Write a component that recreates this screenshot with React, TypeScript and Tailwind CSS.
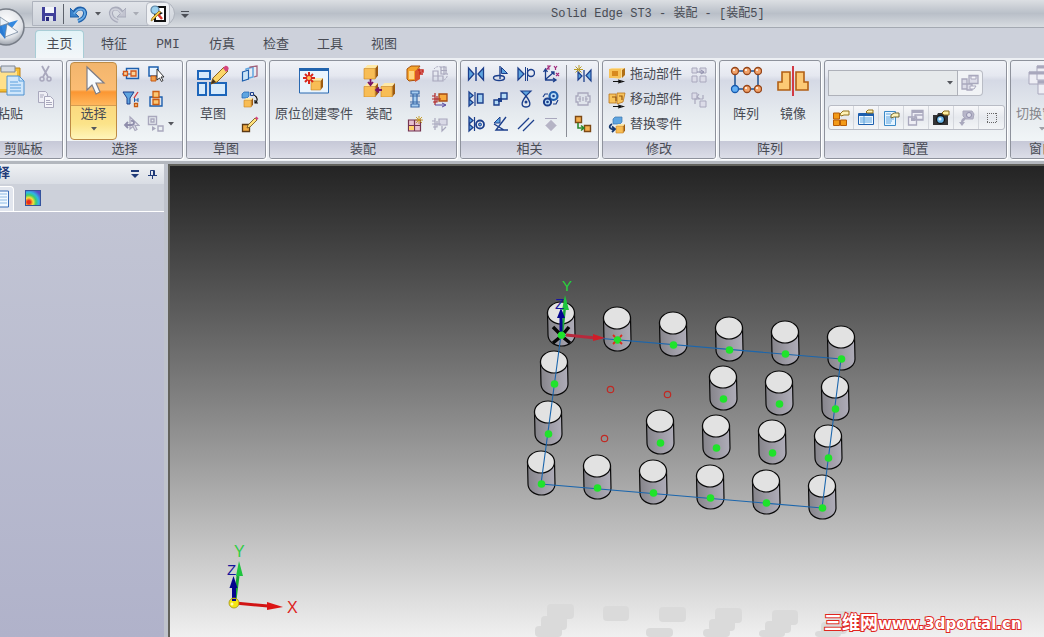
import React from "react";

type IconProps = { children: React.ReactNode; size?: number };

const Icon: React.FC<IconProps> = ({ children, size = 18 }) => (
  <svg
    width={size}
    height={size}
    viewBox={`0 0 ${size} ${size}`}
    fill="none"
    className="shrink-0"
    aria-hidden="true"
  >
    {children}
  </svg>
);

const blue = "#1d5fae";
const navy = "#1c3f8c";
const sky = "#5fa5e0";
const grey = "#a9a8bd";

const Cube: React.FC<{ x: number; y: number; s: number }> = ({ x, y, s }) => (
  <g>
    <path d={`M${x} ${y + s * 0.25}l${s * 0.25} ${-s * 0.25}h${s * 0.75}l${-s * 0.2} ${s * 0.25}z`} fill="#ffe9a6" />
    <path d={`M${x + s * 0.8} ${y + s * 0.25}l${s * 0.2} ${-s * 0.25}v${s * 0.75}l${-s * 0.2} ${s * 0.25}z`} fill="#9c5a10" />
    <path d={`M${x} ${y + s * 0.25}h${s * 0.8}v${s * 0.75}h${-s * 0.8}z`} fill="#f8bd55" stroke="#c98420" strokeWidth="0.6" />
  </g>
);

const icons = {
  cut: (
    <Icon>
      <path d="M5 1l6 11M12 1L6 12" stroke={grey} strokeWidth="1.8" />
      <circle cx="5" cy="14" r="2" stroke={grey} strokeWidth="1.5" />
      <circle cx="12" cy="14" r="2" stroke={grey} strokeWidth="1.5" />
    </Icon>
  ),
  copy: (
    <Icon>
      <path d="M1.5 1.5h7l2 2v9h-9z" fill="#eeeef5" stroke={grey} />
      <path d="M7.5 6.5h6l3 3v8h-9z" fill="#f6f6fa" stroke={grey} />
      <path d="M9 10.500h4M9 12.500h6M9 14.500h6M3 5h4M3 7h3" stroke={grey} />
    </Icon>
  ),
  relate: (
    <Icon>
      <path d="M4.500 3.500h12v10h-12z" stroke={blue} strokeWidth="1.4" />
      <path d="M0 9h9" stroke={blue} />
      <path d="M1.500 6.500h4v4h-4zM9 6h5v5H9z" fill="#fbd39a" stroke="#d4571a" strokeWidth="1.3" />
    </Icon>
  ),
  boxSelect: (
    <Icon>
      <path d="M2 2h9v9H2z" fill="#e9f4ff" stroke={blue} strokeWidth="1.5" />
      <path d="M4 11h5v5H4z" fill="#f2a04a" stroke="#c65b14" />
      <path d="M10 4v11l2.500-2 2 3.500 1.500-1-2-3.500h3z" fill="#fff" stroke="#222" strokeWidth="0.9" />
    </Icon>
  ),
  filter: (
    <Icon>
      <path d="M1 2h11L8 8v6H5V8z" fill={sky} stroke={navy} />
      <path d="M16 2l-4 6" stroke="#d33" strokeWidth="1.3" />
      <path d="M12.500 8v4M16 8v4M12.500 10H16" stroke={blue} />
      <path d="M12.500 13.500h3v3h-3z" fill="#fbd39a" stroke="#c65b14" strokeWidth="1.3" />
    </Icon>
  ),
  partBox: (
    <Icon>
      <path d="M3 7h12v9H3z" stroke={blue} strokeWidth="1.4" />
      <path d="M6 1.500h6v6H6zM6 9.500h6v5H6z" fill="#fbc774" stroke="#cc5c10" strokeWidth="1.3" />
    </Icon>
  ),
  prevSelect: (
    <Icon>
      <path d="M8 2v12l3-2.500 2 4 2-1-2-4h4z" fill="#e2e2ec" stroke={grey} strokeWidth="1.2" />
      <path d="M9 6c4-1 4 4 0 4H3m3-3L3 10l3 3" stroke="#8f8eab" strokeWidth="1.8" />
    </Icon>
  ),
  groupSel: (
    <Icon>
      <path d="M1.500 1.500h8v8h-8zM4 4h3v3H4zM11 11h5v5h-5z" stroke={grey} strokeWidth="1.4" />
      <path d="M5 11l4 2.500L5 16z" fill={grey} />
    </Icon>
  ),
  planes: (
    <Icon>
      <path d="M1.500 7l6-2v9l-6 2z" fill="#cbe4f7" stroke={blue} strokeWidth="1.2" />
      <path d="M5 5V4l7-2v10l-4 1" stroke={sky} strokeWidth="1.5" />
      <path d="M9 3V2l7-1v10l-3 1" stroke="#a3627a" strokeWidth="1.3" />
    </Icon>
  ),
  copySketch: (
    <Icon>
      <path d="M1 4l2-2h5v4L6 8H1z" fill={sky} stroke={blue} strokeWidth="0.7" />
      <path d="M9.500 2.500h3v3h-3z" stroke={navy} />
      <Cube x={3} y={8} s={9} />
      <path d="M13 5c4 2 4 6 1 8m0-3v3h3" stroke="#111" strokeWidth="1.2" />
    </Icon>
  ),
  editSketch: (
    <Icon>
      <path d="M1.500 9.500h7v7h-7z" fill="#f3ad43" stroke="#5b3a16" strokeWidth="1.3" />
      <path d="M7 10l7-7 2 2-7 7-3 1z" fill="#ffe27b" stroke="#6b4c16" strokeWidth="0.8" />
      <path d="M14 3l1.500-1.500 2 2L16 5z" fill="#d6457f" />
    </Icon>
  ),
  panel: (
    <Icon>
      <path d="M1 4l4-3h9l-3 4v10l-8 1-2-2z" fill="#f5a52d" stroke="#a8530b" />
      <path d="M9 6l5-3v11l-5 3z" fill="#d9532c" />
      <path d="M3 6h5v8H3z" fill="#ffd581" />
      <path d="M12 5h5v2h-3v2h3" stroke="#c6271e" strokeWidth="1.5" />
    </Icon>
  ),
  pattern: (
    <Icon>
      <path d="M2 11h5v5H2zM7 11h5v5H7zM2 6h5v5H2z" stroke={grey} strokeWidth="1.2" />
      <path d="M3 4c2-3 6-3 8-1M16 8c1 4-1 6-3 7" stroke={grey} strokeDasharray="2 1" />
      <path d="M10 2h5v7h-5zM10 5.500h6M13 1v9" stroke={grey} strokeWidth="1.2" />
    </Icon>
  ),
  bolt: (
    <Icon>
      <path d="M5 1h8v3H5zM7 4h4v10H7zM5 14h8v3H5z" fill="#a6cdf0" stroke="#3c6ba8" strokeWidth="1.2" />
      <path d="M4 6h10M4 12h10" stroke="#3c6ba8" />
    </Icon>
  ),
  motor: (
    <Icon>
      <path d="M8 4h8v7H8z" fill="#f8a93c" stroke="#a84b11" strokeWidth="1.3" />
      <path d="M4 3v12M1 9h9M1 6h3M6 6v6H2" stroke="#b02424" strokeWidth="1.2" />
      <path d="M4 15h10m-3-2l4 2-4 2" stroke="#53439c" />
    </Icon>
  ),
  fastener: (
    <Icon>
      <path d="M2.500 5h12v11h-12zM2.500 10.500h12M8.500 5v11" fill="#e7c0cf" stroke="#75344f" strokeWidth="1.2" />
      <path d="M3 11h5v4H3z" fill="#ffd36b" />
      <path d="M13 1v8M9 5h8M10 2l6 6M16 2l-6 6" stroke="#c69a19" strokeWidth="0.9" />
    </Icon>
  ),
  motorOff: (
    <Icon>
      <path d="M8 4h8v6H8z" fill="#d9d9e6" stroke={grey} strokeWidth="1.2" />
      <path d="M4 3v12M1 9h9M1 6h3M6 6v6H2M11 11v5l4-4" stroke={grey} strokeWidth="1.2" />
    </Icon>
  ),
  mate: (
    <Icon>
      <path d="M1.500 3L7 9l-5.500 6zM16.500 3L11 9l5.500 6z" fill={sky} stroke={navy} strokeWidth="1.3" />
      <path d="M9 2v14" stroke={navy} strokeWidth="1.5" />
    </Icon>
  ),
  axial: (
    <Icon>
      <path d="M8 1v13" stroke={navy} strokeWidth="1.4" />
      <path d="M9.500 2.500l6 6h-6z" fill={sky} stroke={navy} />
      <ellipse cx="7" cy="13" rx="5.500" ry="2.500" stroke={navy} strokeWidth="1.4" />
    </Icon>
  ),
  insert: (
    <Icon>
      <path d="M1 3l6 6-6 6z" fill={sky} stroke={navy} strokeWidth="1.3" />
      <path d="M8.500 2v14M10.500 3v13" stroke={navy} />
      <circle cx="14" cy="8" r="3.500" stroke={navy} strokeWidth="1.4" />
    </Icon>
  ),
  axes: (
    <Icon>
      <path d="M3.500 15V5m-2 2l2-3 2 3M3 15h10m-2-2l3 2-3 2M4 14l8-7m-3 0h3v3" stroke={navy} strokeWidth="1.3" />
      <path d="M5 1h3L5 4h3M12 1l1.500 2L15 1m-1.500 2v2M14 8l3 3m0-3l-3 3" stroke="#a1297b" strokeWidth="1.2" />
    </Icon>
  ),
  flash: (
    <Icon>
      <path d="M5 0v9M0 4.500h9M1.500 1.500l6 6M7.500 1.500l-6 6" stroke="#b99b26" />
      <path d="M4 7l4 4-4 4zM17 5l-5 5.500 5 5.500z" fill={sky} stroke={navy} strokeWidth="1.2" />
      <path d="M10 5v12" stroke={navy} strokeWidth="1.3" />
    </Icon>
  ),
  align: (
    <Icon>
      <path d="M2 2l4 3.500L2 9zM2 9l4 3.500L2 16z" fill={sky} stroke={navy} strokeWidth="1.3" />
      <path d="M8 2v14" stroke={navy} strokeWidth="1.2" />
      <path d="M10.500 4h5.500v9h-5.500z" fill="#a3d0f2" stroke={navy} strokeWidth="1.4" />
    </Icon>
  ),
  connect: (
    <Icon>
      <path d="M2 10h5v5H2zM9 3h6v6H9z" fill="#b7ddf7" stroke={navy} strokeWidth="1.4" />
      <path d="M6 8h4v4H6z" fill={navy} />
    </Icon>
  ),
  cam: (
    <Icon>
      <path d="M4 1h10L9 6z" fill={sky} stroke={navy} strokeWidth="1.2" />
      <path d="M9 6c-7 9-3 11 0 11s7-2 0-11z" stroke={navy} strokeWidth="1.4" />
      <circle cx="9" cy="12" r="1.500" fill={navy} />
    </Icon>
  ),
  gears: (
    <Icon>
      <circle cx="11.500" cy="6" r="4" fill="#b9dcf7" stroke={blue} strokeWidth="2.200" />
      <circle cx="5.500" cy="12" r="3.600" fill="#b9dcf7" stroke={navy} strokeWidth="2" />
      <circle cx="11.500" cy="6" r="1.300" fill={navy} />
      <circle cx="5.500" cy="12" r="1.300" fill={navy} />
      <path d="M1 7l2-3h3M16 10l-2 4h-3" stroke={navy} strokeWidth="1.2" />
    </Icon>
  ),
  rigid: (
    <Icon>
      <path d="M4 3h10v3h2v6h-2v3H4v-3H2V6h2z" stroke={grey} strokeWidth="1.3" />
      <path d="M6 6v6M9 7v4M12 6v6M4 9h3M11 9h3" stroke={grey} strokeWidth="1.2" />
    </Icon>
  ),
  tangent: (
    <Icon>
      <path d="M2 2l4 3.500L2 9zM2 9l4 3.500L2 16z" fill={sky} stroke={navy} strokeWidth="1.3" />
      <path d="M7.500 2v14" stroke={navy} strokeWidth="1.2" />
      <circle cx="13" cy="9.500" r="4" stroke={navy} strokeWidth="1.8" />
      <circle cx="13" cy="9.500" r="1.500" fill={sky} stroke={navy} />
    </Icon>
  ),
  angle: (
    <Icon>
      <path d="M2 8l6-6v6z" fill={sky} stroke={navy} />
      <path d="M14 2L4 15h12M2 9l10 6" stroke={navy} strokeWidth="1.4" />
    </Icon>
  ),
  parallel: (
    <Icon>
      <path d="M1 14L12 3M6 16L17 5" stroke={navy} strokeWidth="1.3" />
    </Icon>
  ),
  path: (
    <Icon>
      <path d="M3 3.500h12" stroke={grey} />
      <path d="M9 5l5.500 5.500L9 16l-5.500-5.500z" fill="#b5b4c5" stroke="#c9c8d6" />
    </Icon>
  ),
  chain: (
    <Icon>
      <path d="M1.500 1.500h6v6h-6zM10.500 10.500h6v6h-6z" fill="#f3ae4e" stroke="#7d4914" strokeWidth="1.4" />
      <path d="M4 8v5h5m-2-2.500l3 2.500-3 2.500" stroke="#2c8a2c" strokeWidth="1.6" />
    </Icon>
  ),
  drag: (
    <Icon>
      <path d="M1 3l3-1h13l-3 3v6l-3 2-10-2z" fill="#fbd98e" />
      <path d="M14 4l3-2v7l-3 3z" fill="#b06f17" />
      <path d="M1 3h12v9H1z" fill="#f7c258" />
      <path d="M4 5h6v5H4z" fill="#d7891e" />
      <path d="M5 15.500h8m-3-1.500l5 1.500-5 1.500" stroke="#111" strokeWidth="1.2" />
    </Icon>
  ),
  move: (
    <Icon>
      <path d="M1 3h7v9H1zM9 2h8l-2 9-6 2z" fill="#f8c45c" stroke="#b8731c" strokeWidth="0.8" />
      <path d="M4 6h4v4M11 5h3v4" stroke="#95560f" strokeWidth="1.2" />
      <path d="M5 15.500h8m-3-1.500l5 1.500-5 1.500" stroke="#111" strokeWidth="1.2" />
    </Icon>
  ),
  replace: (
    <Icon>
      <path d="M5 3l2-2h7v5l-2 2H5z" fill={sky} stroke="#3b76ad" strokeWidth="0.7" />
      <Cube x={8} y={8} s={9} />
      <path d="M4 8c-5 3-1 6 3 5m-3-2.500L7 13l-3 3" stroke="#16386e" strokeWidth="1.8" />
    </Icon>
  ),
  transfer: (
    <Icon>
      <path d="M2 2h5v5H2zM2 10h5v6H2zM10 10h6v6h-6zM10 2h6v5h-6z" fill="#dcdce8" stroke={grey} />
      <path d="M7 6h6m-2-2l3 2-3 2" stroke="#8f8eab" />
    </Icon>
  ),
  disperse: (
    <Icon>
      <path d="M2 2h5v6H2zM10 10h6v6h-6z" fill="#dcdce8" stroke={grey} />
      <path d="M5 13V8h8M9 3L7 6l3 2M13 8V4" stroke={grey} strokeWidth="1.2" />
    </Icon>
  ),
  saveConfig: (
    <Icon>
      <path d="M1 5h5v5H1zM6 10h5v6H6zM8 1.500h9v8H8zM1 10h5v5H1z" fill="#dcdce8" stroke={grey} strokeWidth="1.3" />
      <path d="M10 2h5v3h-5zM9 12h6l-2 3H9z" fill="#f5f5fa" stroke={grey} />
    </Icon>
  ),
  cfgParts: (
    <Icon>
      <path d="M1.500 4h6v6h-6zM1.500 11h6v5.500h-6zM8.500 11h6v5.500h-6z" fill="#f39a18" stroke="#b65c08" />
      <path d="M8 5l3-3h6v4h-5l-3 1z" fill="#fff3b8" stroke="#94721b" />
    </Icon>
  ),
  cfgTable: (
    <Icon>
      <path d="M1.500 4.500h15v11h-15z" fill="#eff8ff" stroke={blue} />
      <path d="M1.500 5h15v2h-15z" fill={blue} />
      <path d="M3 9h12M3 11h12M3 13h12M7 7v8" stroke={sky} />
      <path d="M9 3l2-2h5v3h-6z" fill="#fff3b8" stroke="#94721b" />
    </Icon>
  ),
  cfgList: (
    <Icon>
      <path d="M2.500 2.500h11v14h-11z" fill="#e6f4ff" stroke="#3c8ac8" />
      <path d="M4 5h5M4 8h7M4 10h8M4 12h6M4 14h5" stroke={sky} />
      <path d="M9 6l3-2h5v4h-5l-3 1z" fill="#fff3b8" stroke="#6b6433" />
    </Icon>
  ),
  cfgCopy: (
    <Icon>
      <path d="M5 1.500h11v9H5zM1.500 8h8v8h-8zM8 6h8v5H8z" fill="#eeeef5" stroke={grey} strokeWidth="1.3" />
      <path d="M5 3h11" stroke={grey} strokeWidth="2" />
      <path d="M4 9h4v3H4z" fill={grey} />
    </Icon>
  ),
  camera: (
    <Icon>
      <path d="M1 6h4l1-2h5l1 2h4v10H1z" fill="#333335" />
      <circle cx="8.500" cy="10.500" r="4" fill="#6bb6e9" stroke="#111" strokeWidth="1.3" />
      <circle cx="8" cy="10" r="1.500" fill="#e9f7ff" />
      <path d="M10 4l2-2h5v4h-5z" fill="#fff0a3" stroke="#86671b" />
    </Icon>
  ),
  camOff: (
    <Icon>
      <path d="M6 2h9l2 3-1 5H9l-3-3z" fill="#b7b6c9" stroke={grey} />
      <circle cx="12" cy="6" r="2.500" fill="#dedeea" stroke="#8f8eab" />
      <path d="M8 8c-3 1-4 3-4 5H2l3 4 3-4H6l3-3" fill={grey} />
    </Icon>
  ),
  dotted: (
    <Icon>
      <path d="M4 4.500h10M4 13.500h10M4.500 4v10M13.500 4v10" stroke="#666" strokeDasharray="1 1" />
    </Icon>
  ),
};

const Group: React.FC<{ title: string; width: string; children: React.ReactNode }> = ({
  title,
  width,
  children,
}) => (
  <section
    className={`${width} flex shrink-0 flex-col overflow-hidden rounded-[3px] border border-[#8e929c] bg-[linear-gradient(#f0f2f7,#e5e8f0_15%,#d5d9e5_20%,#e6ebef_55%,#f1f5f7_83%)] shadow-[1px_1px_0_#ffffff]`}
  >
    <div className="flex h-20 items-start px-[2px]">{children}</div>
    <h2 className="h-[17px] bg-linear-to-b from-[#c6c8d7] to-[#dcdee8] text-center text-[13px] leading-[18px] whitespace-nowrap">
      {title}
    </h2>
  </section>
);

const BigTool: React.FC<{ label: string; width: string; children: React.ReactNode; faded?: boolean }> = ({
  label,
  width,
  children,
  faded,
}) => (
  <button className={`${width} flex shrink-0 flex-col items-center gap-[10px] pt-1`}>
    {children}
    <span className={`text-[13px] leading-4 whitespace-nowrap ${faded ? "text-[#85868c]" : ""}`}>{label}</span>
  </button>
);

type IconName = keyof typeof icons;

const IconGrid: React.FC<{ names: IconName[]; cols: string }> = ({ names, cols }) => (
  <div className={`grid ${cols} auto-rows-[25px]`}>
    {names.map((name) => (
      <button key={name} aria-label={name} className="flex items-center justify-center">
        {icons[name]}
      </button>
    ))}
  </div>
);

const Arrow: React.FC<{ color?: string }> = ({ color = "#55575d" }) => (
  <svg width="6" height="4" viewBox="0 0 6 4" className="shrink-0" aria-hidden="true">
    <path d="M0 0h6L3 3.500z" fill={color} />
  </svg>
);

const tabs = ["主页", "特征", "PMI", "仿真", "检查", "工具", "视图"];

const configTools: IconName[] = ["cfgParts", "cfgTable", "cfgList", "cfgCopy", "camera", "camOff", "dotted"];

const modifyTools: { label: string; icon: IconName; extra?: IconName }[] = [
  { label: "拖动部件", icon: "drag", extra: "transfer" },
  { label: "移动部件", icon: "move", extra: "disperse" },
  { label: "替换零件", icon: "replace" },
];

// base point of every occurrence in the pattern
const parts = [
  [561, 335], [617, 340], [673, 345], [729, 350], [785, 354], [841, 359],
  [554, 384], [723, 399], [779, 404], [835, 409],
  [548, 434], [660, 443], [716, 448], [772, 453], [828, 458],
  [541, 484], [597, 488], [653, 493], [710, 498], [766, 503], [822, 508],
];

const suppressed = [[610, 389], [667, 394], [604, 438]];

const shadows = [
  [547, 604, 27, 15], [541, 616, 26, 14], [535, 626, 27, 11],
  [603, 606, 26, 15], [659, 607, 27, 15], [646, 628, 27, 9],
  [715, 608, 27, 15], [709, 619, 26, 12], [703, 629, 27, 8],
  [772, 610, 26, 15], [765, 621, 26, 12], [759, 630, 26, 7],
  [828, 611, 26, 15], [821, 622, 26, 12], [815, 631, 26, 6],
];

const QuickAccess: React.FC = () => (
  <div className="ml-8 flex h-[25px] items-center rounded-r-2xl border border-[#aeb3bd] bg-linear-to-b from-[#e1e4e9] to-[#cdd2da] pr-1 pl-2">
    <button aria-label="Save">
      <Icon size={16}>
        <path d="M1 1h14v14H1z" fill="#40409a" />
        <path d="M4 1h9v6H4z" fill="#f3f5fb" />
        <path d="M4 10h8v5H4z" fill="#dadfec" />
        <path d="M5 11h3v4H5z" fill="#28287a" />
      </Icon>
    </button>
    <span className="mx-[6px] h-5 w-px bg-[#5d626c]" />
    <button aria-label="Undo">
      <Icon size={18}>
        <path d="M4 8c4-7 12-5 11 1-1 4-3 6-7 7" stroke="#1e5fa9" strokeWidth="4" />
        <path d="M0 3v9h9z" fill="#3c83cc" stroke="#1e5fa9" />
        <path d="M4 9c4-7 11-6 11 0-1 4-3 5-7 7" stroke="#69ace6" strokeWidth="1.800" />
      </Icon>
    </button>
    <span className="mx-[7px]"><Arrow /></span>
    <button aria-label="Redo">
      <Icon size={18}>
        <path d="M14 8C10 1 2 3 3 9c1 4 3 6 7 7" stroke="#a8abba" strokeWidth="4" />
        <path d="M18 3v9H9z" fill="#c2c4d0" stroke="#a8abba" />
        <path d="M14 9C10 2 3 3 3 9c1 4 3 5 7 7" stroke="#ced0da" strokeWidth="1.800" />
      </Icon>
    </button>
    <span className="mx-[7px]"><Arrow color="#a9acb5" /></span>
    <button aria-label="Select options" className="flex size-6 items-center justify-center rounded-sm border border-[#b6bac3] bg-[#eff1f4]">
      <Icon size={18}>
        <path d="M6 2h10v14H6z" fill="#fff" stroke="#111" strokeWidth="2" />
        <path d="M9 6l5 2-5 3z" fill="#111" />
        <circle cx="6" cy="5" r="4" fill="#9ad0ee" stroke="#5d86a6" strokeWidth="1.2" />
        <path d="M8 8l5 6" stroke="#d4352a" strokeWidth="2.500" />
        <path d="M12 7L4 15l-2 1 1-3 7-7z" fill="#f5cc4b" stroke="#8c6b18" strokeWidth="0.7" />
      </Icon>
    </button>
  </div>
);

const Ribbon: React.FC = () => (
  <div className="-ml-4 flex gap-[3px] bg-[#edf0f4] pt-[2px] pb-[2px]">
    <Group title="剪贴板" width="w-[79px]">
      <BigTool label="粘贴" width="w-[46px]">
        <Icon size={32}>
          <path d="M2 3h24v24H2z" fill="#f4be35" stroke="#bd8218" />
          <path d="M5 6h18v18H5z" fill="#ffe08a" />
          <path d="M7 1h14v6H7z" fill="#d5dae2" stroke="#7f8795" />
          <path d="M13 11h12l5 5v14H13z" fill="#cfe6fb" stroke="#4d91d0" />
          <path d="M25 11v5h5M16 17h8M16 20h11M16 23h11M16 26h11" stroke="#5a9fdc" />
        </Icon>
      </BigTool>
      <IconGrid names={["cut", "copy"]} cols="grid-cols-[25px]" />
    </Group>

    <Group title="选择" width="w-[117px]">
      <button className="mx-px mt-px flex h-[78px] w-[47px] shrink-0 flex-col items-center rounded-sm border border-[#bd8b45] bg-[linear-gradient(#f2b56d,#fbbd74_35%,#fb9632_38%,#ffb65c_55%,#d19a50_56%,#fbd97f_57%,#fbe389_80%,#fff5ba)]">
        <Icon size={32}>
          <path d="M9 4v23l5-5 4 9 4-2-4-9h8z" fill="#f8fbfd" stroke="#7d7d86" strokeWidth="1.2" />
        </Icon>
        <span className="mt-3 text-[13px] leading-4">选择</span>
        <span className="mt-1 flex"><Arrow /></span>
      </button>
      <IconGrid
        names={["relate", "boxSelect", "filter", "partBox", "prevSelect", "groupSel"]}
        cols="grid-cols-[25px_25px]"
      />
      <button aria-label="More" className="mt-[50px] flex h-[25px] items-center"><Arrow /></button>
    </Group>

    <Group title="草图" width="w-20">
      <BigTool label="草图" width="w-12">
        <Icon size={32}>
          <path d="M1 6h12v8H1zM1 18h8v12H1zM13 18h16v12H13z" fill="#d8ebfb" stroke="#1c65ba" strokeWidth="2" />
          <path d="M14 19l2-6L27 2l4 4-11 11z" fill="#fbd567" stroke="#8b6220" />
          <path d="M14 19l2-5 3 3z" fill="#3f301d" />
          <path d="M26 3l2-2c2-1 5 2 3 4l-2 2z" fill="#d5457f" />
        </Icon>
      </BigTool>
      <IconGrid names={["planes", "copySketch", "editSketch"]} cols="grid-cols-[25px]" />
    </Group>

    <Group title="装配" width="w-[188px]">
      <BigTool label="原位创建零件" width="w-[84px]">
        <Icon size={32}>
          <path d="M1.500 4h29v24h-29z" fill="#e9f5ff" stroke="#2868b1" />
          <path d="M1 3h30v3H1z" fill="#2163ae" />
          <Cube x={13} y={13} s={12} />
          <path d="M11 7v12M5 13h12M7 9l8 8M15 9l-8 8" stroke="#d8271d" strokeWidth="2" />
          <circle cx="11" cy="13" r="2" fill="#ffc15c" />
        </Icon>
      </BigTool>
      <BigTool label="装配" width="w-[46px]">
        <Icon size={32}>
          <Cube x={1} y={0} s={14} />
          <Cube x={1} y={18} s={14} />
          <Cube x={18} y={18} s={14} />
          <path d="M7.500 14v5m-2.500-2l2.500 3 2.500-3M14 25h5m-3-2.500L13 25l3 2.500" stroke="#7a1763" strokeWidth="1.8" />
        </Icon>
      </BigTool>
      <IconGrid
        names={["panel", "pattern", "bolt", "motor", "fastener", "motorOff"]}
        cols="grid-cols-[25px_25px]"
      />
    </Group>

    <Group title="相关" width="w-[139px]">
      <IconGrid
        names={["mate", "axial", "insert", "axes", "align", "connect", "cam", "gears", "tangent", "angle", "parallel", "path"]}
        cols="grid-cols-[25px_25px_25px_25px]"
      />
      <span className="mx-[3px] mt-1 h-[72px] w-px bg-[#8a8d96]" />
      <IconGrid names={["flash", "rigid", "chain"]} cols="grid-cols-[25px]" />
    </Group>

    <Group title="修改" width="w-[114px]">
      <div className="pt-px pl-[3px]">
        {modifyTools.map((tool) => (
          <div key={tool.label} className="flex h-[25px] items-center gap-2">
            <button className="flex items-center gap-1 text-[13px] leading-4 whitespace-nowrap">
              {icons[tool.icon]}
              {tool.label}
            </button>
            {tool.extra && <button aria-label={tool.extra}>{icons[tool.extra]}</button>}
          </div>
        ))}
      </div>
    </Group>

    <Group title="阵列" width="w-[102px]">
      <BigTool label="阵列" width="w-12">
        <Icon size={32}>
          <path d="M5 6h23v18H5z" stroke="#1c5190" strokeWidth="1.5" />
          {[[5, 6], [17, 6], [28, 6], [17, 24], [28, 24]].map(([x, y]) => (
            <g key={`${x}-${y}`}>
              <circle cx={x} cy={y} r="3.500" fill="#f2a36a" stroke="#96461b" strokeWidth="1.3" />
              <circle cx={x - 1} cy={y - 1} r="1" fill="#fff" />
            </g>
          ))}
          <circle cx="5" cy="24" r="3.500" fill="#64b0f5" stroke="#1659ad" strokeWidth="1.3" />
        </Icon>
      </BigTool>
      <BigTool label="镜像" width="w-[46px]">
        <Icon size={32}>
          <path d="M13 7v18H1v-8h4V7zM19 7v18h12v-8h-4V7z" fill="#fcc975" stroke="#b15f15" strokeWidth="1.6" />
          <path d="M16 1v30" stroke="#d23a45" strokeWidth="2" />
        </Icon>
      </BigTool>
    </Group>

    <Group title="配置" width="w-[183px]">
      <div className="flex flex-col gap-[9px] pt-[9px] pl-px">
        <div className="flex h-[26px]">
          <div className="relative w-[130px]">
            <select
              aria-label="配置"
              className="h-full w-full appearance-none border border-[#aeb1b9] bg-[#e6e9eb] text-[13px]"
            />
            <span className="pointer-events-none absolute top-[11px] right-[5px] flex"><Arrow /></span>
          </div>
          <button
            aria-label="saveConfig"
            className="flex w-[25px] items-center justify-center rounded-r-sm border border-l-0 border-[#b9bcc5] bg-[#f1f3f6]"
          >
            {icons.saveConfig}
          </button>
        </div>
        <div className="flex h-[25px] divide-x divide-[#d4d7dd] rounded-[3px] border border-[#b9bcc5] bg-linear-to-b from-[#f7f8fa] via-[#e6e9ee] to-[#f3f5f7]">
          {configTools.map((name) => (
            <button key={name} aria-label={name} className="flex w-[25px] shrink-0 items-center justify-center">
              {icons[name]}
            </button>
          ))}
        </div>
      </div>
    </Group>

    <Group title="窗口" width="w-16">
      <div className="flex flex-col items-center">
        <BigTool label="切换窗口" width="w-[58px]" faded>
          <Icon size={32}>
            <path d="M11 1h20v14H11zM3 7h20v12H3zM12 16h20v13H12z" fill="#eeeef5" stroke={grey} />
            <path d="M11 2h20M3 8h20M12 17h20" stroke={grey} strokeWidth="3" />
          </Icon>
        </BigTool>
        <span className="mt-1 flex"><Arrow color="#a0a1a8" /></span>
      </div>
    </Group>
  </div>
);

const SidePanel: React.FC = () => (
  <aside className="flex w-[168px] shrink-0 flex-col border-r-4 border-[#bfc3cc] bg-linear-to-b from-[#c4c7d5] to-[#b0b2ca]">
    <header className="flex h-5 items-center bg-linear-to-b from-[#eff1f4] to-[#d9dde4] pr-[7px] text-[#1f3a78]">
      <h2 className="-ml-4 flex-1 text-[13px] leading-4 font-bold">选择</h2>
      <button aria-label="Menu">
        <Icon size={10}>
          <path d="M1 1h8v2H1zM1 5h8L5 9z" fill="#1f3a78" />
        </Icon>
      </button>
      <button aria-label="Pin" className="ml-2">
        <Icon size={9}>
          <path d="M2.500 0.500h4v5h-4zM0 5.500h9M4.500 6v3" stroke="#1f3a78" />
          <path d="M5.500 1v4" stroke="#1f3a78" />
        </Icon>
      </button>
    </header>
    <div className="flex h-7 items-end border-b border-white bg-[#cdd1da]">
      <button aria-label="List" className="flex h-[25px] w-[14px] items-center rounded-tr border-t border-r border-white bg-[#e2e6ee]">
        <svg width="10" height="18" viewBox="0 0 10 18" className="shrink-0" aria-hidden="true">
          <path d="M-6 1h14.500v16H-6z" fill="#f2f9ff" stroke="#3a6fb8" />
          <path d="M0 4h7M0 7h7M0 10h7M0 13h7" stroke="#8ebbe5" />
        </svg>
      </button>
      <button aria-label="Colours" className="ml-[11px] flex size-4 self-center border border-[#35539d] bg-[radial-gradient(circle_at_20%_80%,#e92c1c_10%,#fbe03a_28%,#3ecf6a_45%,#2fb6e5_62%,#5a49c4_85%)]" />
    </div>
  </aside>
);

const Triad: React.FC = () => (
  <g>
    <path d="M235 600l3-24" stroke="#18a834" strokeWidth="3" />
    <path d="M239 561l4 15h-7z" fill="#1fc43e" />
    <path d="M234 603v-16" stroke="#04058e" strokeWidth="4" />
    <path d="M233.500 576l4 12h-8z" fill="#04058e" />
    <path d="M235 603l33 3" stroke="#d11414" strokeWidth="3" />
    <path d="M267 602l16 5-16 3z" fill="#dc1515" />
    <circle cx="234" cy="603" r="5" fill="#f3e514" stroke="#a39412" strokeWidth="0.8" />
    <circle cx="232" cy="604" r="1.500" fill="#fffbb4" />
    <path d="M232 600h4" stroke="#04058e" strokeWidth="2" />
    <text x="234" y="557" fontSize="16" fill="#2fce45">Y</text>
    <text x="227" y="575" fontSize="15" fill="#15159c">Z</text>
    <text x="287" y="613" fontSize="16" fill="#d22">X</text>
  </g>
);

const Viewport: React.FC = () => (
  <main className="min-w-0 flex-1 overflow-hidden border-t-2 border-l-2 border-[#62625c] bg-linear-to-b from-[#242424] to-[#f0f0f0]">
    <svg viewBox="170 166 874 471" className="block h-full w-full font-['Liberation_Sans',sans-serif]">
      <defs>
        <linearGradient id="barrel">
          <stop offset="0" stopColor="#85848a" />
          <stop offset="0.6" stopColor="#a09ea8" />
          <stop offset="1" stopColor="#aeacb8" />
        </linearGradient>
      </defs>
      {shadows.map(([x, y, w, h]) => (
        <rect key={`${x}-${y}`} x={x} y={y} width={w} height={h} rx="4" fill="#dadada" />
      ))}
      {parts.map(([x, y]) => (
        <g key={`${x}-${y}`} stroke="#0a0a0a" strokeWidth="1.2">
          <path d={`M${x - 13.5} ${y - 22}l0.500 22c0 6 6 11 13.500 11s13.500-5 13.500-11l-0.500-22z`} fill="url(#barrel)" />
          <ellipse cx={x} cy={y - 22} rx="13.500" ry="11" fill="#e2e2e2" />
        </g>
      ))}
      <path d="M561 335l280 24-19 149-281-24z" fill="none" stroke="#1b66ad" strokeWidth="1.1" />
      {parts.map(([x, y]) => (
        <circle key={`${x}-${y}`} cx={x + 0.5} cy={y} r="3.800" fill="#1fe32b" />
      ))}
      {suppressed.map(([x, y]) => (
        <circle key={`${x}-${y}`} cx={x + 0.5} cy={y + 0.5} r="3.200" fill="none" stroke="#c02a24" strokeWidth="1.2" />
      ))}
      <path d="M613 335l2 2m5 0l2-2m-9 9l2-2m5 0l2 2" stroke="#e02a1c" strokeWidth="1.800" />
      <path d="M562 334l3-28" stroke="#1aa93a" strokeWidth="2.500" />
      <path d="M565 295l4 15h-7z" fill="#1fc43e" />
      <path d="M561 332v-16" stroke="#04058e" strokeWidth="3" />
      <path d="M561 308l4 10h-8z" fill="#04058e" />
      <path d="M566 335l30 3" stroke="#b6293c" strokeWidth="3" />
      <path d="M593 334l12 4-12 3z" fill="#cf1d28" />
      <path d="M553 327l6 6m5 5l6 5m-1-16l-5 6m-5 5l-6 5" stroke="#080808" strokeWidth="3.500" />
      <circle cx="561.500" cy="335" r="3.500" fill="#1fe32b" />
      <text x="562" y="291" fontSize="15" fill="#27d43b">Y</text>
      <text x="555" y="309" fontSize="15" fill="#15159c">Z</text>
      <Triad />
      <text
        x="824"
        y="629"
        fontSize="15"
        fontWeight="bold"
        fill="#fff"
        stroke="#e0251f"
        strokeWidth="2"
        paintOrder="stroke"
        className="font-['DejaVu_Sans','Noto_Sans_CJK_SC',sans-serif]"
      >
        <tspan fontSize="18">三维网</tspan>www.3dportal.cn
      </text>
    </svg>
  </main>
);

export default function App() {
  return (
    <div className="flex h-screen flex-col overflow-hidden bg-[#cdd1da] font-['Liberation_Mono','Noto_Sans_CJK_SC',monospace] text-[#484b54]">
      <div className="relative">
        <header className="flex h-7 items-center border-b border-[#a4a9b2] bg-[linear-gradient(#dcdfe3,#b9bfc8_50%,#d8dce1)]">
          <QuickAccess />
          <button aria-label="Customize" className="ml-1.5">
            <Icon size={8}>
              <path d="M0 1h8v1H0zM0 4h8L4 8z" fill="#4c4f57" />
            </Icon>
          </button>
          <h1 className="flex-1 pt-px pl-[362px] text-xs leading-4 whitespace-pre">Solid Edge ST3 - 装配 - [装配5]</h1>
        </header>
        <nav className="flex h-[30px] items-end bg-[#cdd1db] pl-8">
          {tabs.map((tab, i) => (
            <a
              key={tab}
              href="#"
              className={
                i === 0
                  ? "mx-[3px] flex h-7 w-[49px] items-center justify-center rounded-t border border-b-0 border-[#a8cdd6] bg-linear-to-b from-[#e3f3f7] to-[#f3f6f9] pt-px text-[13px]"
                  : "flex h-7 w-[54px] items-center justify-center pt-[2px] text-[13px]"
              }
            >
              {tab}
            </a>
          ))}
        </nav>
        {/* application button hangs over the title bar and the tab row */}
        <button aria-label="Application" className="absolute top-[7px] -left-[14px]">
          <svg width="40" height="40" viewBox="0 0 40 40">
            <defs>
              <radialGradient id="orb" cx="0.5" cy="0.35" r="0.65">
                <stop offset="0" stopColor="#ffffff" />
                <stop offset="0.7" stopColor="#dfe2e7" />
                <stop offset="1" stopColor="#9ba1ab" />
              </radialGradient>
            </defs>
            <circle cx="20" cy="20" r="18" fill="url(#orb)" stroke="#777d87" strokeWidth="1.5" />
            <path d="M6 16l17 3-4 13z" fill="#2a7ad2" />
            <path d="M32 13l-17 5 4 12z" fill="#3489e0" />
            <path d="M21 17l11 8-13 5z" fill="#f4f7fb" stroke="#6c7f97" strokeWidth="0.7" />
            <path d="M14 10l9 6-9 3z" fill="#eaf1f8" stroke="#6c7f97" strokeWidth="0.7" />
          </svg>
        </button>
      </div>
      <div className="overflow-hidden border-b-[3px] border-[#b3b7be]">
        <Ribbon />
      </div>
      <div className="flex min-h-0 flex-1">
        <SidePanel />
        <Viewport />
      </div>
    </div>
  );
}
